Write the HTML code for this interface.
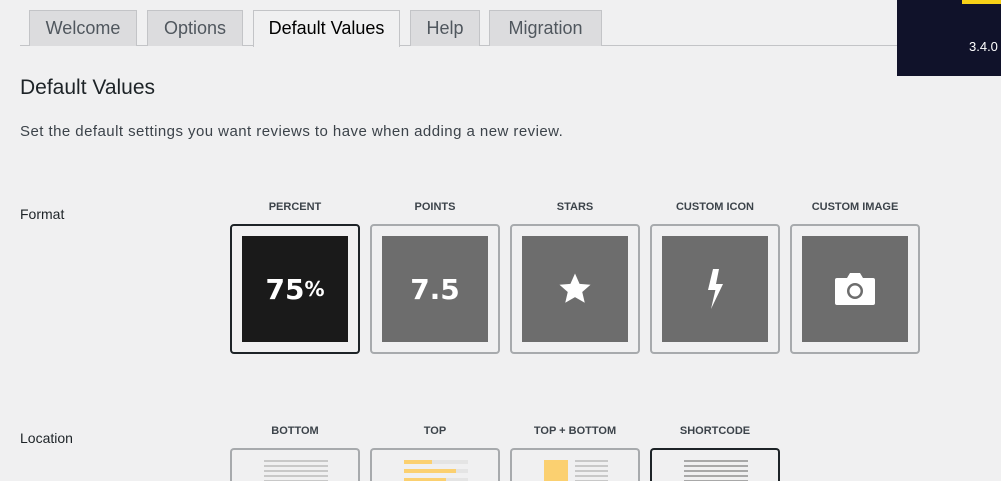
<!DOCTYPE html>
<html><head><meta charset="utf-8"><style>
*{margin:0;padding:0;box-sizing:border-box}
html,body{width:1001px;height:481px;overflow:hidden}
body{background:#f0f0f1;font-family:"Liberation Sans",sans-serif;color:#1d2327;position:relative}
.a{position:absolute}
.tab{position:absolute;top:10px;height:36px;background:#dcdcde;border:1px solid #c3c4c7;border-bottom:none;font-size:18px;color:#50575e;text-align:center;line-height:35px}
.tab.on{background:#f0f0f1;color:#000;height:37px}
.lbl{position:absolute;font-size:11px;font-weight:bold;color:#3c434a;text-align:center;width:130px}
.card{position:absolute;width:130px;height:130px;border:2px solid #a7aaad;border-radius:4px;background:#f0f0f1}
.card.on{border-color:#1d2327}
.card.cut{height:33px;border-bottom:none;border-radius:4px 4px 0 0}
.in{position:absolute;left:10px;top:10px;width:106px;height:106px;background:#6d6d6d;display:flex;align-items:center;justify-content:center;color:#fff;font-weight:bold;font-size:30px}
</style></head><body>
<div class="a" style="left:20px;top:45px;width:877px;height:1px;background:#c3c4c7"></div>
<div class="tab" style="left:29px;width:108px">Welcome</div>
<div class="tab" style="left:147px;width:96px">Options</div>
<div class="tab on" style="left:253px;width:147px">Default Values</div>
<div class="tab" style="left:410px;width:70px">Help</div>
<div class="tab" style="left:489px;width:113px">Migration</div>
<div class="a" style="left:897px;top:0;width:104px;height:76px;background:#10122a"></div>
<div class="a" style="left:962px;top:0;width:39px;height:4px;background:#f7d117"></div>
<div class="a" style="left:969px;top:39px;font-size:13px;color:#fff">3.4.0</div>
<div class="a" style="left:20px;top:76px;font-size:21px;color:#1d2327">Default Values</div>
<div class="a" style="left:20px;top:123px;font-size:15px;color:#3c434a;letter-spacing:0.45px">Set the default settings you want reviews to have when adding a new review.</div>
<div class="a" style="left:20px;top:206px;font-size:14px">Format</div>
<div class="a" style="left:20px;top:430px;font-size:14px">Location</div>

<div class="lbl" style="left:230px;top:201px">PERCENT</div>
<div class="lbl" style="left:370px;top:201px">POINTS</div>
<div class="lbl" style="left:510px;top:201px">STARS</div>
<div class="lbl" style="left:650px;top:201px">CUSTOM ICON</div>
<div class="lbl" style="left:790px;top:201px">CUSTOM IMAGE</div>

<div class="card on" style="left:230px;top:224px"><div class="in" style="background:#1a1a1a;font-family:'DejaVu Sans',sans-serif;font-size:28px">75<span style="font-size:20px">%</span></div></div>
<div class="card" style="left:370px;top:224px"><div class="in" style="font-family:'DejaVu Sans',sans-serif;font-size:28px">7.5</div></div>
<div class="card" style="left:510px;top:224px"><div class="in"><svg width="36" height="34" viewBox="0 0 24 23"><path d="M12 1l3.1 7 7.4.6-5.6 4.9 1.7 7.3L12 17l-6.6 3.8 1.7-7.3L1.5 8.6 8.9 8z" fill="#fff"/></svg></div></div>
<div class="card" style="left:650px;top:224px"><div class="in"><svg width="20" height="40" viewBox="0 0 10 20"><path d="M4 0h3L5.5 7.5H9L3 20l2.2-9.5H1.5z" fill="#fff"/></svg></div></div>
<div class="card" style="left:790px;top:224px"><div class="in"><svg width="42" height="34" viewBox="0 0 42 34"><path d="M3 6h10l3-5h10l3 5h10a2 2 0 0 1 2 2v23a2 2 0 0 1-2 2H3a2 2 0 0 1-2-2V8a2 2 0 0 1 2-2z" fill="#fff"/><circle cx="21" cy="19" r="8" fill="#6d6d6d"/><circle cx="21" cy="19" r="5.5" fill="#fff"/></svg></div></div>

<div class="lbl" style="left:230px;top:425px">BOTTOM</div>
<div class="lbl" style="left:370px;top:425px">TOP</div>
<div class="lbl" style="left:510px;top:425px">TOP + BOTTOM</div>
<div class="lbl" style="left:650px;top:425px">SHORTCODE</div>

<div class="card cut" style="left:230px;top:448px"><div class="a" style="left:32px;top:10px;width:64px;height:22px;background:repeating-linear-gradient(#c8c8c8 0 2px,transparent 2px 5px)"></div></div>
<div class="card cut" style="left:370px;top:448px">
<div class="a" style="left:32px;top:10px;width:64px;height:4px;background:#e4e4e4"></div><div class="a" style="left:32px;top:10px;width:28px;height:4px;background:#fbd070"></div>
<div class="a" style="left:32px;top:19px;width:64px;height:4px;background:#e4e4e4"></div><div class="a" style="left:32px;top:19px;width:52px;height:4px;background:#fbd070"></div>
<div class="a" style="left:32px;top:28px;width:64px;height:3px;background:#e4e4e4"></div><div class="a" style="left:32px;top:28px;width:42px;height:3px;background:#fbd070"></div></div>
<div class="card cut" style="left:510px;top:448px"><div class="a" style="left:32px;top:10px;width:24px;height:21px;background:#fbd070"></div><div class="a" style="left:63px;top:10px;width:33px;height:21px;background:repeating-linear-gradient(#c8c8c8 0 2px,transparent 2px 5px)"></div></div>
<div class="card cut on" style="left:650px;top:448px"><div class="a" style="left:32px;top:10px;width:64px;height:21px;background:repeating-linear-gradient(#a8a8a8 0 2px,transparent 2px 5px)"></div></div>
</body></html>
